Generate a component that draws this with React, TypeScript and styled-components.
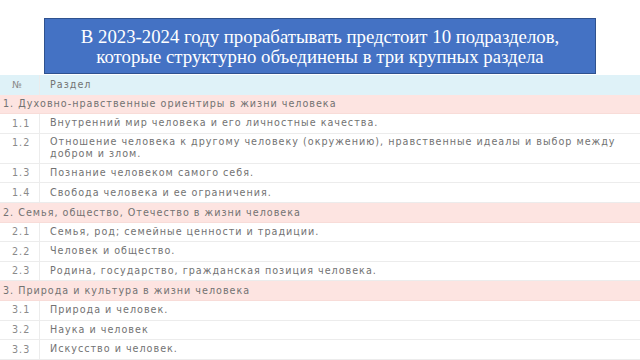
import React from 'react'
import styled, { createGlobalStyle } from 'styled-components'

interface Item {
    num: string
    text: string
}

interface Section {
    title: string
    items: Item[]
}

const sections: Section[] = [
    {
        title: '1. Духовно-нравственные ориентиры в жизни человека',
        items: [
            { num: '1.1', text: 'Внутренний мир человека и его личностные качества.' },
            { num: '1.2', text: 'Отношение человека к другому человеку (окружению), нравственные идеалы и выбор между добром и злом.' },
            { num: '1.3', text: 'Познание человеком самого себя.' },
            { num: '1.4', text: 'Свобода человека и ее ограничения.' },
        ],
    },
    {
        title: '2. Семья, общество, Отечество в жизни человека',
        items: [
            { num: '2.1', text: 'Семья, род; семейные ценности и традиции.' },
            { num: '2.2', text: 'Человек и общество.' },
            { num: '2.3', text: 'Родина, государство, гражданская позиция человека.' },
        ],
    },
    {
        title: '3. Природа и культура в жизни человека',
        items: [
            { num: '3.1', text: 'Природа и человек.' },
            { num: '3.2', text: 'Наука и человек' },
            { num: '3.3', text: 'Искусство и человек.' },
        ],
    },
]

const Slide: React.FC = () => {
    return (
        <Page>
            <GlobalStyle />
            <Banner>
                В 2023-2024 году прорабатывать предстоит 10 подразделов,<br />
                которые структурно объединены в три крупных раздела
            </Banner>
            <Table>
                <HeadRow>
                    <NumCell>№</NumCell>
                    <TextCell>Раздел</TextCell>
                </HeadRow>
                {sections.map(section => (
                    <React.Fragment key={section.title}>
                        <SectionRow>{section.title}</SectionRow>
                        {section.items.map(item => (
                            <Row key={item.num}>
                                <NumCell>{item.num}</NumCell>
                                <TextCell>{item.text}</TextCell>
                            </Row>
                        ))}
                    </React.Fragment>
                ))}
            </Table>
        </Page>
    )
}

const GlobalStyle = createGlobalStyle`
    body {
        margin: 0;
        background: #ffffff;
    }
`

const Page = styled.div`
    width: 640px;
    height: 360px;
    overflow: hidden;
    display: flex;
    flex-direction: column;
    align-items: center;
    padding-top: 18px;
    box-sizing: border-box;
`

const Banner = styled.div`
    flex-shrink: 0;
    width: 552px;
    height: 56px;
    box-sizing: border-box;
    background: #4472c4;
    border: 1px solid #2f528f;
    color: #ffffff;
    font-family: "Liberation Serif", serif;
    font-size: 18.8px;
    line-height: 20px;
    text-align: center;
    display: flex;
    flex-direction: column;
    justify-content: center;
    padding-top: 2px;
`

const Table = styled.div`
    flex-shrink: 0;
    width: 640px;
    display: flex;
    flex-direction: column;
    font-family: "DejaVu Sans", sans-serif;
    font-size: 9.6px;
    color: #727272;
    letter-spacing: 1px;
`

const Row = styled.div`
    display: flex;
    min-height: 19.6px;
    border-bottom: 1px solid #ececec;
    box-sizing: border-box;
`

const HeadRow = styled(Row)`
    background: #dff2f8;
    margin-top: 1px;
    border-bottom: none;
`

const SectionRow = styled.div`
    background: #fde4e1;
    min-height: 19.6px;
    display: flex;
    align-items: center;
    padding-left: 3px;
    border-bottom: 1px solid #f8dcd8;
    box-sizing: border-box;
`

const NumCell = styled.div`
    width: 40px;
    flex-shrink: 0;
    padding: 3.5px 0 0 12px;
    line-height: 12px;
    box-sizing: border-box;
    border-right: 1px solid #ececec;
    color: #8a8a8a;
`

const TextCell = styled.div`
    flex: 1;
    padding: 2.5px 12px 2.5px 10px;
    line-height: 12px;
    display: flex;
    align-items: center;
`

export default Slide
